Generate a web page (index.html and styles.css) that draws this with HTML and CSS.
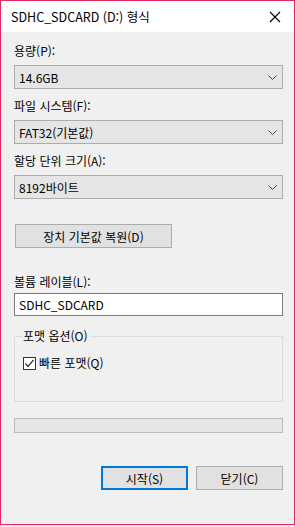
FILE: index.html
```html
<!DOCTYPE html>
<html lang="ko">
  <head>
    <meta charset="UTF-8" />
    <meta name="viewport" content="width=device-width, initial-scale=1.0" />
    <title>형식</title>
    <link rel="stylesheet" href="styles.css">
  </head>
  <body>
    <div class="dialog">
      <div class="titlebar">
        <span class="title">SDHC_SDCARD (D:) 형식</span>
        <svg class="close" width="12" height="12" viewBox="0 0 12 12">
          <path d="M1 1 L11 11 M11 1 L1 11" stroke="#000" stroke-width="1.1" fill="none" />
        </svg>
      </div>
      <div class="content">
        <div class="label first">용량(P):</div>
        <div class="combo">
          <span>14.6GB</span>
          <svg class="chev" width="9" height="5" viewBox="0 0 9 5"><path d="M0.5 0.5 L4.5 4.5 L8.5 0.5" stroke="#444" fill="none" /></svg>
        </div>

        <div class="label">파일 시스템(F):</div>
        <div class="combo">
          <span>FAT32(기본값)</span>
          <svg class="chev" width="9" height="5" viewBox="0 0 9 5"><path d="M0.5 0.5 L4.5 4.5 L8.5 0.5" stroke="#444" fill="none" /></svg>
        </div>

        <div class="label">할당 단위 크기(A):</div>
        <div class="combo">
          <span>8192바이트</span>
          <svg class="chev" width="9" height="5" viewBox="0 0 9 5"><path d="M0.5 0.5 L4.5 4.5 L8.5 0.5" stroke="#444" fill="none" /></svg>
        </div>

        <button class="btn restore">장치 기본값 복원(D)</button>

        <div class="label vol">볼륨 레이블(L):</div>
        <div class="textbox">SDHC_SDCARD</div>

        <fieldset class="group">
          <legend>포맷 옵션(O)</legend>
          <label class="check">
            <span class="box">
              <svg width="11" height="11" viewBox="0 0 11 11"><path d="M1.5 5.5 L4 8.5 L9.5 2" stroke="#333" stroke-width="1.2" fill="none" /></svg>
            </span>
            빠른 포맷(Q)
          </label>
        </fieldset>

        <div class="progress"></div>

        <div class="actions">
          <button class="btn primary">시작(S)</button>
          <button class="btn">닫기(C)</button>
        </div>
      </div>
    </div>
  </body>
</html>
```

FILE: styles.css
```css
* {
  padding: 0;
  margin: 0;
  box-sizing: border-box;
}
body {
  background: #e8e8e8;
  font-family: "Noto Sans CJK KR", "Noto Sans", sans-serif;
  font-size: 12px;
  color: #000;
}
.dialog {
  width: 295px;
  height: 525px;
  border: 1px solid #e2285f;
  background: #f0f0f0;
  display: flex;
  flex-direction: column;
}
.titlebar {
  height: 31px;
  background: #fff;
  display: flex;
  align-items: center;
  justify-content: space-between;
  padding: 0 13px 0 10px;
}
.title {
  font-size: 12.5px;
  line-height: 16px;
}
.content {
  padding: 0 11px 0 13px;
  display: flex;
  flex-direction: column;
}
.label {
  line-height: 16px;
  height: 16px;
  margin-top: 9px;
}
.label.first {
  margin-top: 11px;
}
.combo {
  margin-top: 6px;
  height: 24px;
  background: #e5e5e5;
  border: 1px solid #acacac;
  display: flex;
  align-items: center;
  justify-content: space-between;
  padding: 0 5px 0 4px;
}
.combo + .label {
  margin-top: 9px;
}
.btn {
  font-family: inherit;
  font-size: 12px;
  height: 24px;
  background: #e1e1e1;
  border: 1px solid #adadad;
  color: #000;
}
.restore {
  margin-top: 25px;
  margin-left: 1px;
  width: 157px;
}
.label.vol {
  margin-top: 26px;
}
.textbox {
  margin-top: 3px;
  height: 23px;
  background: #fff;
  border: 1px solid #7a7a7a;
  padding-left: 4px;
  line-height: 21px;
}
.group {
  margin-top: 13px;
  height: 73px;
  border: 1px solid #dcdcdc;
  padding: 0 0 0 8px;
}
.group legend {
  padding: 0 2px 0 1px;
  margin-left: -1px;
  line-height: 14px;
}
.check {
  display: flex;
  align-items: center;
  gap: 3px;
  margin-top: 13px;
  line-height: 14px;
}
.box {
  width: 13px;
  height: 13px;
  border: 1px solid #333;
  background: #fff;
  display: flex;
  align-items: center;
  justify-content: center;
}
.progress {
  margin-top: 16px;
  height: 15px;
  background: #e6e6e6;
  border: 1px solid #bcbcbc;
}
.actions {
  margin-top: 33px;
  display: flex;
  justify-content: flex-end;
  gap: 8px;
}
.actions .btn {
  width: 87px;
}
.primary {
  border: 2px solid #0078d7;
}
```
